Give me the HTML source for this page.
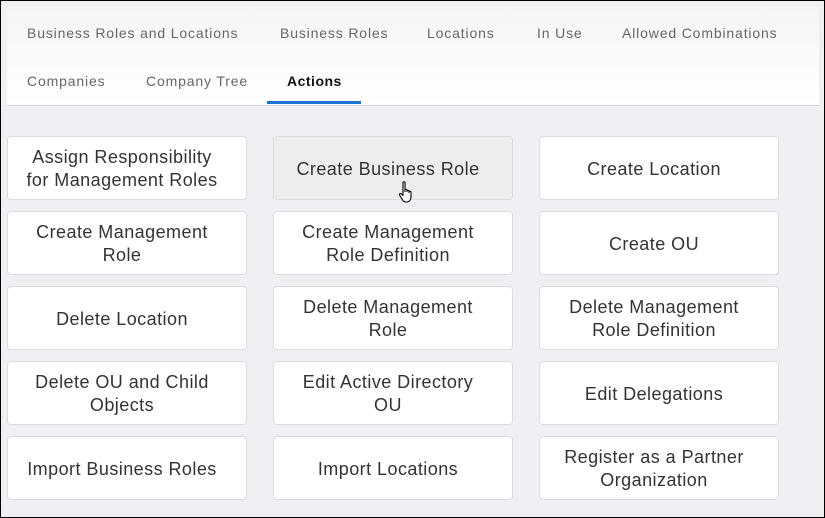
<!DOCTYPE html>
<html><head><meta charset="utf-8"><style>
*{box-sizing:border-box;margin:0;padding:0}
html,body{width:825px;height:518px;overflow:hidden}
body{background:#eff0f4;font-family:"Liberation Sans",sans-serif;position:relative;box-shadow:inset 0 0 0 1px #000}
.hdr{position:absolute;left:7px;top:7px;width:812px;height:99px;background:linear-gradient(#f4f5f7,#fff);border-bottom:1px solid #d9d9dd}
.t{position:absolute;font-size:14px;color:#666;letter-spacing:0.85px;white-space:nowrap}
.act{color:#111;font-weight:bold;letter-spacing:0.5px}
.ul{position:absolute;left:260px;top:94px;width:94px;height:3px;background:#1a73d4}
.b{position:absolute;width:240px;height:64px;background:#fff;border:1px solid #dcdcdf;border-radius:4px;display:flex;align-items:center;justify-content:center;text-align:center;font-size:18px;letter-spacing:0.45px;line-height:23px;color:#333;padding:2px 10px 0 0;white-space:nowrap}
.h{background:#ededee}
</style></head><body>
<div class="hdr">
<div class="t" style="left:20px;top:18px">Business Roles and Locations</div>
<div class="t" style="left:273px;top:18px">Business Roles</div>
<div class="t" style="left:420px;top:18px">Locations</div>
<div class="t" style="left:530px;top:18px">In Use</div>
<div class="t" style="left:615px;top:18px">Allowed Combinations</div>
<div class="t" style="left:20px;top:66px">Companies</div>
<div class="t" style="left:139px;top:66px">Company Tree</div>
<div class="t act" style="left:280px;top:66px">Actions</div>
<div class="ul"></div>
</div>
<div class="b" style="left:7px;top:136px">Assign Responsibility<br>for Management Roles</div>
<div class="b h" style="left:273px;top:136px">Create Business Role</div>
<div class="b" style="left:539px;top:136px">Create Location</div>
<div class="b" style="left:7px;top:211px">Create Management<br>Role</div>
<div class="b" style="left:273px;top:211px">Create Management<br>Role Definition</div>
<div class="b" style="left:539px;top:211px">Create OU</div>
<div class="b" style="left:7px;top:286px">Delete Location</div>
<div class="b" style="left:273px;top:286px">Delete Management<br>Role</div>
<div class="b" style="left:539px;top:286px">Delete Management<br>Role Definition</div>
<div class="b" style="left:7px;top:361px">Delete OU and Child<br>Objects</div>
<div class="b" style="left:273px;top:361px">Edit Active Directory<br>OU</div>
<div class="b" style="left:539px;top:361px">Edit Delegations</div>
<div class="b" style="left:7px;top:436px">Import Business Roles</div>
<div class="b" style="left:273px;top:436px">Import Locations</div>
<div class="b" style="left:539px;top:436px">Register as a Partner<br>Organization</div>
<svg style="position:absolute;left:398px;top:180px" width="20" height="26" viewBox="0 0 20 26">
<path d="M5 2.5c0-1 2-1 2 0V12 M7 10c0-1 2-1 2 0v2 M9 11c0-1 2-1 2 0v2 M11 12c0-1 2-1 2 0v5c0 3-2 5-4 5H8c-2 0-3-1-4-3L1.5 15c-.5-1 1-2 2-1L5 15.5V2.5" fill="#fff" stroke="#000" stroke-width="1.1" stroke-linejoin="round"/>
</svg>
</body></html>
